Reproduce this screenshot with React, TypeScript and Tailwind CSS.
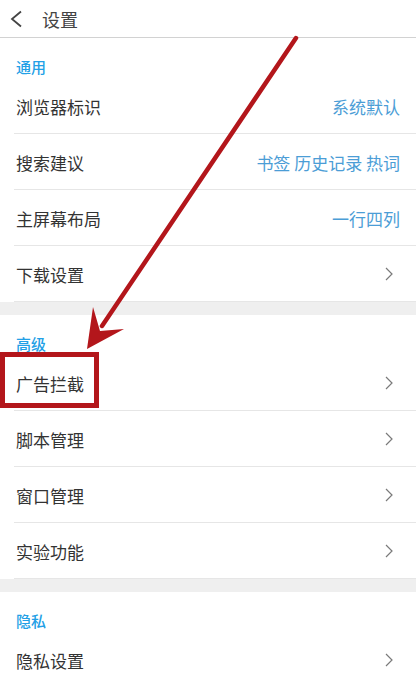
import React from 'react';

type Row = { label: string; value?: string };
type Section = { title: string; rows: Row[] };

const sections: Section[] = [
  {
    title: '通用',
    rows: [
      { label: '浏览器标识', value: '系统默认' },
      { label: '搜索建议', value: '书签 历史记录 热词' },
      { label: '主屏幕布局', value: '一行四列' },
      { label: '下载设置' },
    ],
  },
  {
    title: '高级',
    rows: [{ label: '广告拦截' }, { label: '脚本管理' }, { label: '窗口管理' }, { label: '实验功能' }],
  },
  {
    title: '隐私',
    rows: [{ label: '隐私设置' }],
  },
];

const Chevron: React.FC = () => (
  <svg width="8" height="14" viewBox="0 0 8 14" className="mr-[23px]">
    <path d="M1 1 L7 7 L1 13" fill="none" stroke="#7a7a7a" strokeWidth="1.2" />
  </svg>
);

const App: React.FC = () => {
  return (
    <div
      className="relative w-[416px] h-[685px] overflow-hidden bg-white text-[#333]"
      style={{ fontFamily: '"Noto Sans CJK SC", "Noto Sans", sans-serif' }}
    >
      {/* Header */}
      <div className="flex items-center h-[38px] border-b border-[#d2d2d2]">
        <svg width="14" height="18" viewBox="0 0 14 18" className="ml-[9px]">
          <path d="M12 1.5 L3 9 L12 16.5" fill="none" stroke="#444" strokeWidth="1.8" />
        </svg>
        <span className="ml-[19px] text-[18px] leading-none text-[#444]">设置</span>
      </div>

      {sections.map((section, si) => (
        <div key={section.title}>
          {si > 0 && <div className="h-[13px] bg-[#efefef]" />}
          <div className="h-[40px] pt-[19px] pl-[16px] text-[15px] leading-[20px] font-medium text-[#22a0e6]">
            {section.title}
          </div>
          {section.rows.map((row) => (
            <div key={row.label} className="pl-[14px]">
              <div className="flex items-center justify-between h-[56px] border-b border-[#e6e6e6]">
                <span className="pl-[2px] pt-[3px] text-[17px]">{row.label}</span>
                {row.value ? (
                  <span className="pr-[16px] pt-[3px] text-[17px] text-[#4b9dd6]">{row.value}</span>
                ) : (
                  <Chevron />
                )}
              </div>
            </div>
          ))}
        </div>
      ))}

      {/* Annotation overlay */}
      <svg
        className="absolute left-0 top-0 pointer-events-none"
        width="416"
        height="685"
        viewBox="0 0 416 685"
      >
        <line x1="296" y1="38" x2="102" y2="326" stroke="#b3161b" strokeWidth="4.5" strokeLinecap="round" />
        <polygon points="87,349 93,307 100,331 124,329" fill="#b3161b" />
        <rect x="2.5" y="354.5" width="94" height="51" fill="none" stroke="#b3161b" strokeWidth="5" />
      </svg>
    </div>
  );
};

export default App;
